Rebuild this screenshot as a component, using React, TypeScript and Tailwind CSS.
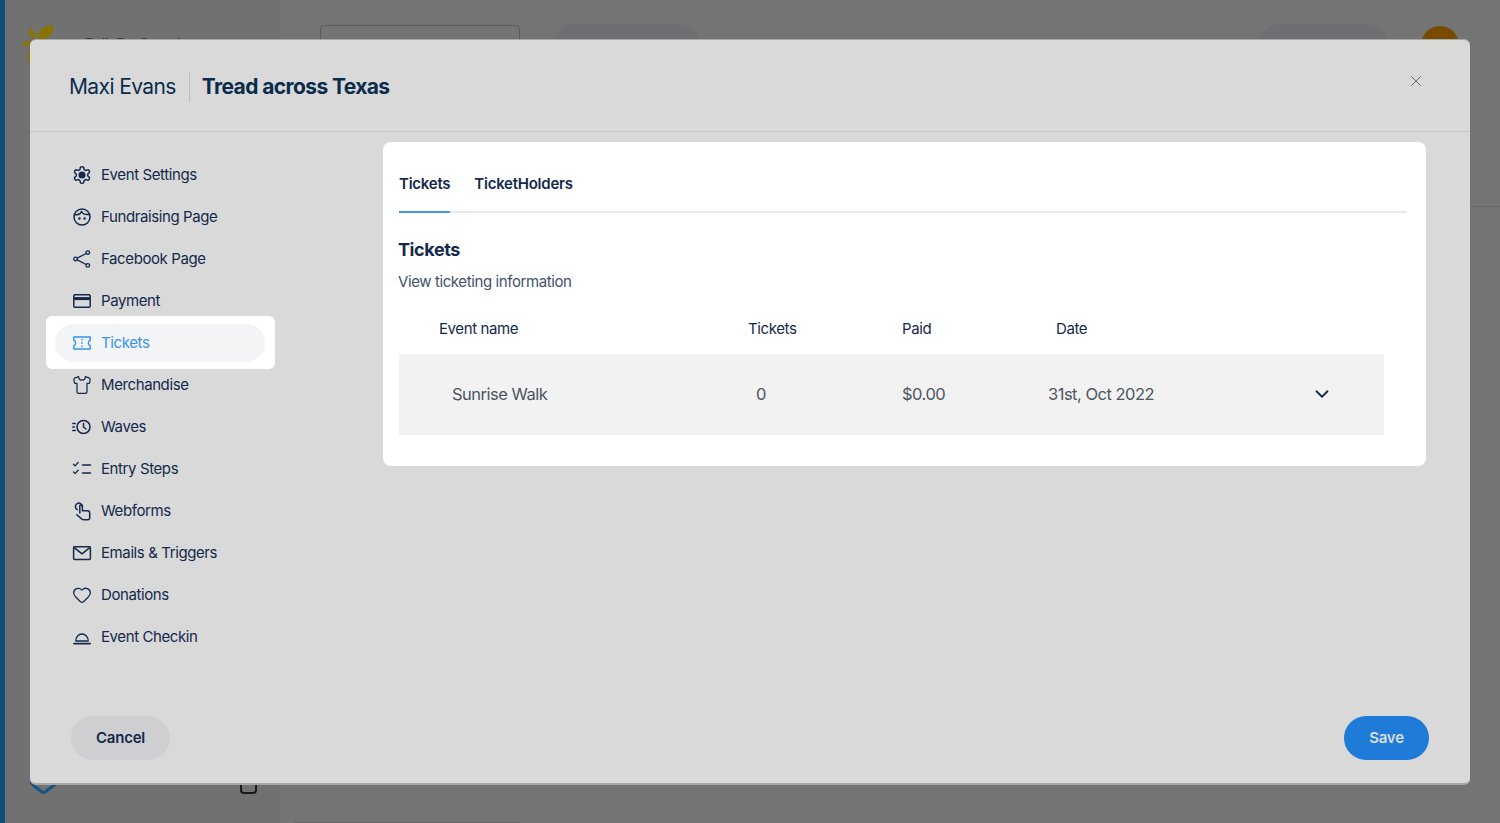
import { ChevronDown, Heart, Shirt, X } from 'lucide-react';
import type { ReactNode } from 'react';

const ink = '#14294b';

function Icon({ children, box = 20 }: { children: ReactNode; box?: number }) {
  return (
    <svg width="20" height="20" viewBox={`0 0 ${box} ${box}`} fill="none" stroke="currentColor" strokeWidth={box === 24 ? 1.8 : 1.5} strokeLinecap="round" strokeLinejoin="round" className="shrink-0 -ml-px mr-[9px]">
      {children}
    </svg>
  );
}

const GearIcon = () => (
  <Icon box={24}>
    <path d="M12.220 2h-.44a2 2 0 0 0-2 2v.18a2 2 0 0 1-1 1.730l-.43.25a2 2 0 0 1-2 0l-.15-.08a2 2 0 0 0-2.730.73l-.22.38a2 2 0 0 0 .73 2.730l.15.1a2 2 0 0 1 1 1.720v.51a2 2 0 0 1-1 1.740l-.15.09a2 2 0 0 0-.73 2.730l.22.38a2 2 0 0 0 2.730.73l.15-.08a2 2 0 0 1 2 0l.43.25a2 2 0 0 1 1 1.730V20a2 2 0 0 0 2 2h.44a2 2 0 0 0 2-2v-.18a2 2 0 0 1 1-1.730l.43-.25a2 2 0 0 1 2 0l.15.08a2 2 0 0 0 2.730-.73l.22-.39a2 2 0 0 0-.73-2.730l-.15-.08a2 2 0 0 1-1-1.740v-.5a2 2 0 0 1 1-1.740l.15-.09a2 2 0 0 0 .73-2.730l-.22-.38a2 2 0 0 0-2.730-.73l-.15.08a2 2 0 0 1-2 0l-.43-.25a2 2 0 0 1-1-1.730V4a2 2 0 0 0-2-2z" />
    <circle cx="12" cy="12" r="3.400" fill="currentColor" />
  </Icon>
);

const FaceIcon = () => (
  <Icon>
    <circle cx="10" cy="10" r="8" />
    <path d="M3 7.500c3 .6 5.500-.4 6.600-3 1.200 2.400 3.600 3.400 7.200 3" />
    <circle cx="7.400" cy="11.400" r=".5" fill="currentColor" />
    <circle cx="12.600" cy="11.400" r=".5" fill="currentColor" />
  </Icon>
);

const ShareIcon = () => (
  <Icon>
    <g strokeWidth="1.300">
      <circle cx="15.800" cy="3.600" r="1.800" />
      <circle cx="3.600" cy="10" r="1.800" />
      <circle cx="15.800" cy="16.400" r="1.800" />
      <path d="m5.200 9.100 9-4.600M5.200 10.900l9 4.600" />
    </g>
  </Icon>
);

const CardIcon = () => (
  <Icon>
    <rect x="1.800" y="3.800" width="16.400" height="12.400" rx="1.200" />
    <path d="M2 7.600h16" strokeWidth="3" strokeLinecap="butt" />
  </Icon>
);

const TicketIcon = () => (
  <Icon>
    <path d="M1.800 4h16.400v3.200c-2.400.7-2.400 4.900 0 5.600V16H1.800v-3.200c2.400-.7 2.400-4.900 0-5.600z" />
    <path d="M10 6.500v.5M10 9.700v.6M10 13v.5" />
  </Icon>
);

const WavesIcon = () => (
  <Icon>
    <circle cx="11.500" cy="10" r="6.500" />
    <path d="M11.500 6.500V10l2.500 2" />
    <path d="M.8 6.500h2.400M.8 10h1.600M.8 13.500h2.400" />
  </Icon>
);

const StepsIcon = () => (
  <Icon>
    <path d="m1.500 5.300 1.600 1.600 3-3.400M1.500 13l1.600 1.600 3-3.400" strokeWidth="1.300" />
    <path d="M10.500 6h8M10.500 14h8" />
  </Icon>
);

const PointerIcon = () => (
  <Icon>
    <path d="M5.200 8.600a3.500 3.500 0 0 1 .8-6.400 3.200 3.200 0 0 1 4 2.600" />
    <path d="M7.800 12V5a1.300 1.300 0 0 1 2.600 0v4.800h5.300a2 2 0 0 1 2 2v5a2 2 0 0 1-2 2h-4c-1.200 0-2-.5-2.700-1.400L4.800 13.800" />
  </Icon>
);

const MailIcon = () => (
  <Icon>
    <rect x="1.600" y="3.800" width="16.800" height="12.600" rx="1.200" />
    <path d="m2 4.400 8 6.400 8-6.400" />
  </Icon>
);

const BellIcon = () => (
  <Icon>
    <path d="M3.800 14c0-4 2.700-7 6.200-7s6.200 3 6.200 7z" strokeWidth="1.300" />
    <path d="M1.800 16.600h16.400" strokeWidth="1.600" />
  </Icon>
);

const lucideProps = { size: 20, strokeWidth: 1.5, className: 'shrink-0 -ml-px mr-[9px]' };

const navItems: { label: string; icon: ReactNode; active?: boolean }[] = [
  { label: 'Event Settings', icon: <GearIcon /> },
  { label: 'Fundraising Page', icon: <FaceIcon /> },
  { label: 'Facebook Page', icon: <ShareIcon /> },
  { label: 'Payment', icon: <CardIcon /> },
  { label: 'Tickets', icon: <TicketIcon />, active: true },
  { label: 'Merchandise', icon: <Shirt {...lucideProps} /> },
  { label: 'Waves', icon: <WavesIcon /> },
  { label: 'Entry Steps', icon: <StepsIcon /> },
  { label: 'Webforms', icon: <PointerIcon /> },
  { label: 'Emails & Triggers', icon: <MailIcon /> },
  { label: 'Donations', icon: <Heart {...lucideProps} /> },
  { label: 'Event Checkin', icon: <BellIcon /> },
];

function NavItem({ label, icon, active }: { label: string; icon: ReactNode; active?: boolean }) {
  if (active) {
    return (
      <div className="ml-4 -mt-[6px] -mb-[5px] h-[53px] w-[229px] rounded-md bg-white pl-[9px] pr-[10px] pt-[8px]">
        <div className="flex h-[38px] w-full items-center rounded-full bg-[#f3f4f6] pl-[18px] text-[#3a94f2]">
          {icon}
          <span>{label}</span>
        </div>
      </div>
    );
  }
  return (
    <div className="flex h-[42px] items-center pl-[43px]" style={{ color: ink }}>
      {icon}
      <span>{label}</span>
    </div>
  );
}

function BackgroundPage() {
  return (
    <div className="flex h-[823px] overflow-hidden bg-[#747474]">
      <div className="w-[5px] bg-[#0d4f78]" />
      <div className="flex w-[275px] flex-col bg-[#717171] pl-[17px] pr-[23px] pt-[25px]">
        <div className="flex items-start gap-[31px]">
          <svg width="32" height="40" viewBox="0 0 32 40" fill="#8a7400">
            <path d="M16 14c-1-8 4-13 15-14 1 9-4 15-15 14zM12 14C7 12 6 8 8 4c5 1 7 5 4 10zM12 17c-5-2-9-1-12 2 3 3 8 3 12-2zM9 20c-2 3-3 8-3 20 3-6 5-13 3-20z" />
          </svg>
          <span className="mt-[8px] text-[14px] font-medium text-[#2f3640]">Built For Speed</span>
        </div>
        <div className="mt-auto flex items-end justify-between pb-[29px] pl-2">
          <svg width="28" height="14" viewBox="0 0 28 14" fill="none" stroke="#125682" strokeWidth="3">
            <path d="M1 0c0 3 1 4 3 6l8 6c1 1 2 1 3 0l8-6c2-1 3-3 3-6" />
          </svg>
          <div className="h-[24px] w-[17px] rounded-sm border-2 border-[#1a1a1a]" />
        </div>
      </div>
      <div className="flex flex-1 flex-col">
        <div className="flex h-[207px] items-start border-b border-[#666666] pl-[40px] pr-[41px] pt-[24px]">
          <div className="mt-px h-[40px] w-[200px] rounded border border-[#5a5a5a]" />
          <div className="ml-[32px] h-[44px] w-[148px] rounded-[22px] bg-[#6e6f70]" />
          <div className="ml-auto h-[44px] w-[130px] rounded-[22px] bg-[#6e6f70]" />
          <div className="ml-[33px] mt-[2px] h-[38px] w-[38px] rounded-full bg-[#7a4a00]" />
        </div>
        <div className="ml-[15px] mt-auto h-px w-[225px] bg-[#666666]" />
      </div>
    </div>
  );
}

export default function App() {
  return (
    <div className="relative h-[823px] overflow-hidden text-[15px] tracking-[-0.4px] [font-family:Inter,'Liberation_Sans',sans-serif]">
      <BackgroundPage />
      <div className="absolute inset-0 flex items-start justify-center pt-[39px]">
        <div className="flex h-[746px] w-[1440px] flex-col rounded-md border-t border-b-2 border-[#a8a8a8] bg-[#d9d9d9]">
          <div className="flex h-[92px] shrink-0 items-center border-b border-[#c6c6c6] pl-[39px] pr-[45px] pt-[3px]">
            <span className="text-[21px] tracking-[-0.6px] text-[#0b2c4b]">Maxi Evans</span>
            <div className="ml-[13px] mr-[12px] h-[30px] w-px bg-[#b9bec5]" />
            <span className="text-[21px] font-bold tracking-[-0.6px] text-[#0b2c4b]">Tread across Texas</span>
            <X size={18} strokeWidth={1.25} className="ml-auto -mt-[13px] text-[#666666]" />
          </div>

          <div className="flex flex-1">
            <nav className="w-[353px] shrink-0 pt-[22px]">
              {navItems.map((item) => (
                <NavItem key={item.label} {...item} />
              ))}
            </nav>
            <div className="pt-[10px]">
              <div className="h-[324px] w-[1043px] rounded-lg bg-white pl-[16px] pr-[19px]">
                <div className="flex h-[71px] items-start gap-[24px] border-b-2 border-[#e8e8e8] pt-[31px] font-semibold tracking-[-0.25px]" style={{ color: ink }}>
                  <div className="-mb-[2px] h-[40px] border-b-2 border-[#3a94f2]">Tickets</div>
                  <div>TicketHolders</div>
                </div>
                <h2 className="-ml-px mt-[25px] text-[18px] font-bold leading-[24px]" style={{ color: ink }}>Tickets</h2>
                <p className="-ml-px mt-[9px] text-[#42526b]">View ticketing information</p>
                <div className="mt-[24px] grid h-[36px] w-[985px] grid-cols-[309px_154px_154px_1fr] pl-[40px]" style={{ color: ink }}>
                  <span>Event name</span>
                  <span>Tickets</span>
                  <span>Paid</span>
                  <span>Date</span>
                </div>
                <div className="flex h-[81px] w-[985px] items-center bg-[#f2f2f2] text-[16.5px] tracking-[-0.5px] text-[#4d5561]">
                  <span className="ml-[53px] w-[304px]">Sunrise Walk</span>
                  <span className="w-[146px]">0</span>
                  <span className="w-[146px]">$0.00</span>
                  <span className="w-[263px]">31st, Oct 2022</span>
                  <ChevronDown size={22} strokeWidth={2} style={{ color: ink }} />
                </div>
              </div>
            </div>
          </div>

          <div className="flex shrink-0 justify-between pb-[23px] pl-[41px] pr-[41px]">
            <button className="h-[44px] w-[99px] rounded-full bg-[#cfcfd2] font-semibold tracking-[-0.2px]" style={{ color: ink }}>Cancel</button>
            <button className="h-[44px] w-[85px] rounded-full bg-[#1f7bd8] font-semibold tracking-[-0.2px] text-[#d9dde2]">Save</button>
          </div>
        </div>
      </div>
    </div>
  );
}
